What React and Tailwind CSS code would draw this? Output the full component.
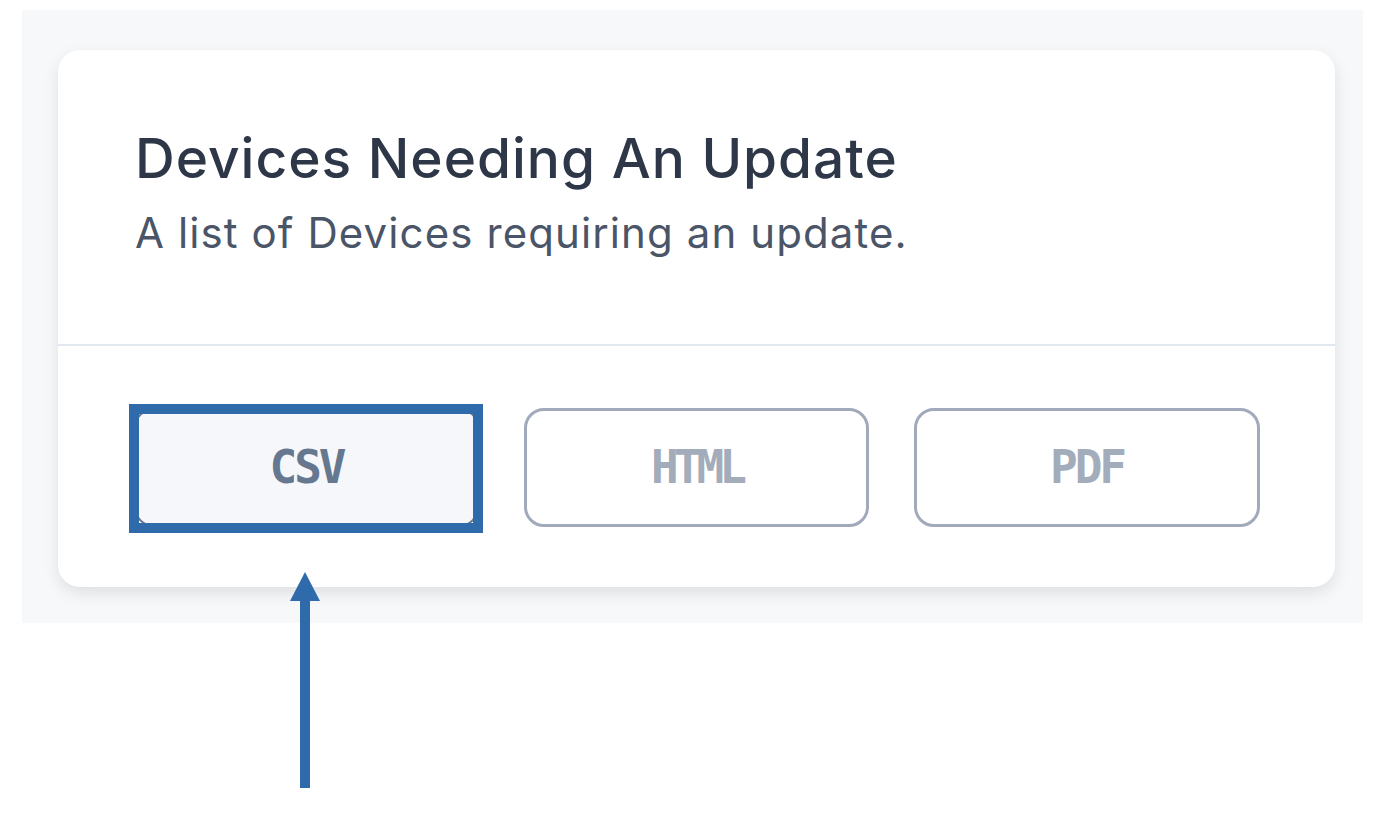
export default function App() {
  const btnFont = { fontFamily: '"DejaVu Sans Mono", "Liberation Mono", monospace' };
  return (
    <div className="relative h-[816px] w-[1388px] overflow-hidden bg-white" style={{ fontFamily: 'Inter, "Noto Sans", sans-serif' }}>
      <div className="ml-[22px] mt-[10px] h-[613px] w-[1341px] bg-[#f7f8fa] pl-[36px] pt-[40px]">
        <div className="w-[1277px] rounded-[22px] bg-white shadow-[0_6px_16px_rgba(0,0,0,0.10)]">
          <div className="border-b-2 border-[#e2e8f0] pl-[77px] pr-[40px] pt-[76px] pb-[87px]">
            <h1 className="text-[55px] font-medium leading-[64px] tracking-[1px] text-[#2d3748]">Devices Needing An Update</h1>
            <p className="mt-[19px] text-[42px] leading-[48px] tracking-[1.1px] text-[#4a5568]">A list of Devices requiring an update.</p>
          </div>
          <div className="flex gap-[45px] pl-[76px] pt-[62px] pb-[60px]">
            <button className="flex h-[119px] w-[345px] items-center justify-center rounded-[20px] border-2 border-[#6b778c] bg-[#f5f7fa]">
              <span className="text-[46px] font-bold tracking-[-3px] text-[#667790]" style={btnFont}>CSV</span>
            </button>
            <button className="flex h-[119px] w-[345px] items-center justify-center rounded-[20px] border-[3px] border-[#a0aabb] bg-white">
              <span className="text-[46px] font-bold tracking-[-5px] text-[#a3acba]" style={btnFont}>HTML</span>
            </button>
            <button className="flex h-[119px] w-[346px] items-center justify-center rounded-[20px] border-[3px] border-[#a0aabb] bg-white">
              <span className="text-[46px] font-bold tracking-[-3px] text-[#a3acba]" style={btnFont}>PDF</span>
            </button>
          </div>
        </div>
      </div>
      <div className="absolute left-[129px] top-[404px] h-[129px] w-[354px] border-[10px] border-[#2f6aab]" />
      <svg className="absolute left-[290px] top-[572px]" width="30" height="216" viewBox="0 0 30 216">
        <polygon points="15,0 0,29 30,29" fill="#2f6aab" />
        <rect x="10" y="28" width="10" height="188" fill="#2f6aab" />
      </svg>
    </div>
  );
}
